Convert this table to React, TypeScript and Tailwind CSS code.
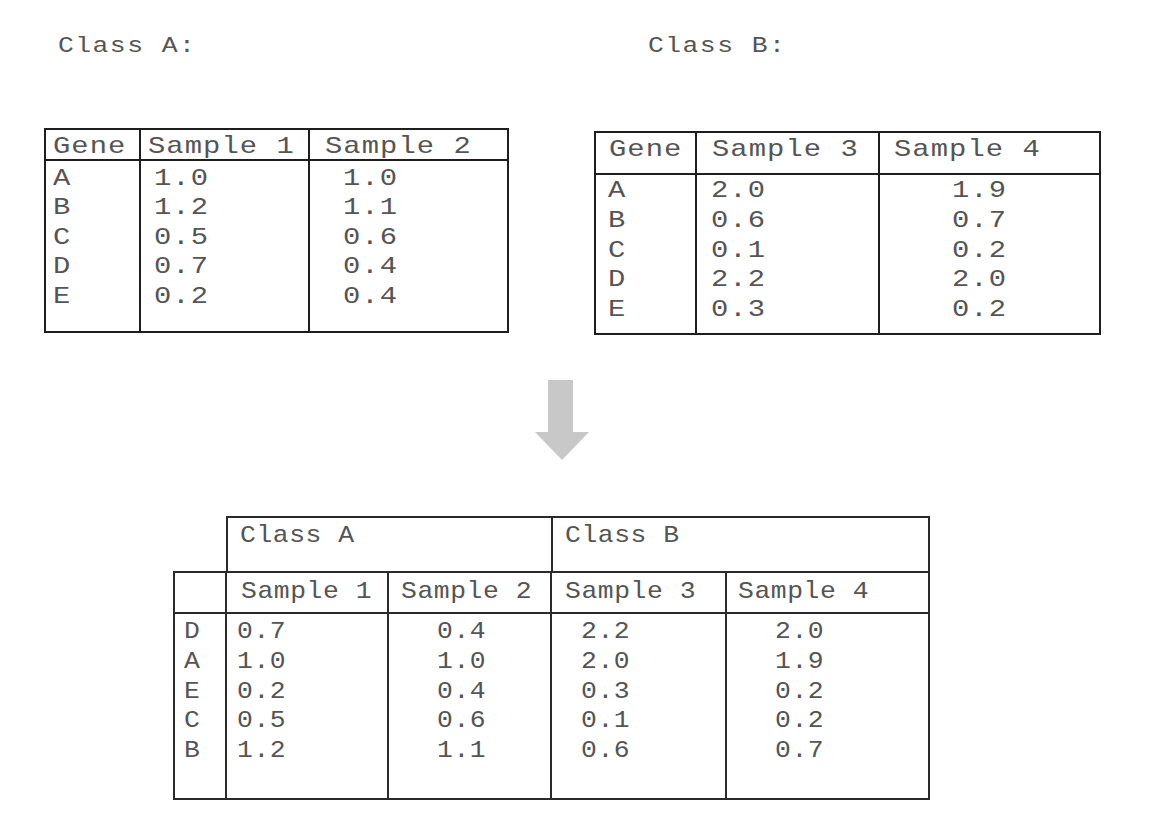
import React from "react";

const TOP = "inline-block origin-left scale-x-[1.2] tracking-[0.9px] whitespace-pre";
const BOT = "inline-block origin-left scale-x-[1.1] tracking-[0.5px] whitespace-pre";
const TTL = "inline-block origin-left scale-x-[1.2] tracking-[1.2px] whitespace-pre";

function Rows({ items, cls }: { items: string[]; cls: string }) {
  return (
    <>
      {items.map((t, i) => (
        <div key={i}>
          <span className={cls}>{t}</span>
        </div>
      ))}
    </>
  );
}

export default function App() {
  return (
    <div className="relative h-[840px] w-[1158px] overflow-hidden bg-white pt-[35px] font-['Liberation_Mono',monospace] text-[24px] text-[#555555]">
      {/* top section */}
      <div className="flex items-start">
        {/* Class A */}
        <div className="ml-[44px] w-[465px]">
          <div className="h-[24px] pl-[14px] text-[22px] leading-[24px]">
            <span className={TTL}>Class A:</span>
          </div>
          <div className="mt-[69px] flex h-[205px] w-[465px] border-2 border-[#1e1e1e]">
            <div className="w-[95px] border-r-2 border-[#1e1e1e]">
              <div className="h-[31px] border-b-2 border-[#1e1e1e] pl-[7px] pt-[5px] leading-[24px]">
                <span className={TOP}>Gene</span>
              </div>
              <div className="pl-[7px] pt-[3px] leading-[29.4px]">
                <Rows items={["A", "B", "C", "D", "E"]} cls={TOP} />
              </div>
            </div>
            <div className="w-[169px] border-r-2 border-[#1e1e1e]">
              <div className="h-[31px] border-b-2 border-[#1e1e1e] pl-[7px] pt-[5px] leading-[24px]">
                <span className={TOP}>Sample 1</span>
              </div>
              <div className="pl-[13px] pt-[3px] leading-[29.4px]">
                <Rows items={["1.0", "1.2", "0.5", "0.7", "0.2"]} cls={TOP} />
              </div>
            </div>
            <div className="flex-1">
              <div className="h-[31px] border-b-2 border-[#1e1e1e] pl-[15px] pt-[5px] leading-[24px]">
                <span className={TOP}>Sample 2</span>
              </div>
              <div className="pl-[33px] pt-[3px] leading-[29.4px]">
                <Rows items={["1.0", "1.1", "0.6", "0.4", "0.4"]} cls={TOP} />
              </div>
            </div>
          </div>
        </div>

        {/* Class B */}
        <div className="ml-[85px] w-[507px]">
          <div className="h-[24px] pl-[54px] text-[22px] leading-[24px]">
            <span className={TTL}>Class B:</span>
          </div>
          <div className="mt-[72px] flex h-[204px] w-[507px] border-2 border-[#1e1e1e]">
            <div className="w-[101px] border-r-2 border-[#1e1e1e]">
              <div className="h-[42px] border-b-2 border-[#1e1e1e] pl-[13px] pt-[2px] leading-[30px]">
                <span className={TOP}>Gene</span>
              </div>
              <div className="pl-[12px] pt-[1px] leading-[29.75px]">
                <Rows items={["A", "B", "C", "D", "E"]} cls={TOP} />
              </div>
            </div>
            <div className="w-[183px] border-r-2 border-[#1e1e1e]">
              <div className="h-[42px] border-b-2 border-[#1e1e1e] pl-[15px] pt-[2px] leading-[30px]">
                <span className={TOP}>Sample 3</span>
              </div>
              <div className="pl-[14px] pt-[1px] leading-[29.75px]">
                <Rows items={["2.0", "0.6", "0.1", "2.2", "0.3"]} cls={TOP} />
              </div>
            </div>
            <div className="flex-1">
              <div className="h-[42px] border-b-2 border-[#1e1e1e] pl-[14px] pt-[2px] leading-[30px]">
                <span className={TOP}>Sample 4</span>
              </div>
              <div className="pl-[72px] pt-[1px] leading-[29.75px]">
                <Rows items={["1.9", "0.7", "0.2", "2.0", "0.2"]} cls={TOP} />
              </div>
            </div>
          </div>
        </div>
      </div>

      {/* arrow */}
      <div className="ml-[535px] mt-[45px] h-[80px] w-[54px]">
        <svg width="54" height="80" viewBox="0 0 54 80">
          <path d="M13 0 H38 V52 H54 L27 80 L0 52 H13 Z" fill="#c8c8c8" />
        </svg>
      </div>

      {/* merged table */}
      <div className="ml-[173px] mt-[56px] w-[757px]">
        <div className="ml-[53px] flex h-[55px] border-x-2 border-t-2 border-[#2a2a2a]">
          <div className="w-[325px] border-r-2 border-[#2a2a2a] pl-[12px] pt-[3px] leading-[30px]">
            <span className={BOT}>Class A</span>
          </div>
          <div className="flex-1 pl-[12px] pt-[3px] leading-[30px]">
            <span className={BOT}>Class B</span>
          </div>
        </div>
        <div className="flex h-[229px] border-2 border-[#2a2a2a]">
          <div className="w-[52px] border-r-2 border-[#2a2a2a]">
            <div className="h-[41px] border-b-2 border-[#2a2a2a]" />
            <div className="pl-[9px] pt-[3px] leading-[29.8px]">
              <Rows items={["D", "A", "E", "C", "B"]} cls={BOT} />
            </div>
          </div>
          <div className="w-[162px] border-r-2 border-[#2a2a2a]">
            <div className="h-[41px] border-b-2 border-[#2a2a2a] pl-[14px] pt-[4px] leading-[30px]">
              <span className={BOT}>Sample 1</span>
            </div>
            <div className="pl-[10px] pt-[3px] leading-[29.8px]">
              <Rows items={["0.7", "1.0", "0.2", "0.5", "1.2"]} cls={BOT} />
            </div>
          </div>
          <div className="w-[163px] border-r-2 border-[#2a2a2a]">
            <div className="h-[41px] border-b-2 border-[#2a2a2a] pl-[12px] pt-[4px] leading-[30px]">
              <span className={BOT}>Sample 2</span>
            </div>
            <div className="pl-[48px] pt-[3px] leading-[29.8px]">
              <Rows items={["0.4", "1.0", "0.4", "0.6", "1.1"]} cls={BOT} />
            </div>
          </div>
          <div className="w-[175px] border-r-2 border-[#2a2a2a]">
            <div className="h-[41px] border-b-2 border-[#2a2a2a] pl-[13px] pt-[4px] leading-[30px]">
              <span className={BOT}>Sample 3</span>
            </div>
            <div className="pl-[29px] pt-[3px] leading-[29.8px]">
              <Rows items={["2.2", "2.0", "0.3", "0.1", "0.6"]} cls={BOT} />
            </div>
          </div>
          <div className="flex-1">
            <div className="h-[41px] border-b-2 border-[#2a2a2a] pl-[11px] pt-[4px] leading-[30px]">
              <span className={BOT}>Sample 4</span>
            </div>
            <div className="pl-[48px] pt-[3px] leading-[29.8px]">
              <Rows items={["2.0", "1.9", "0.2", "0.2", "0.7"]} cls={BOT} />
            </div>
          </div>
        </div>
      </div>
    </div>
  );
}
